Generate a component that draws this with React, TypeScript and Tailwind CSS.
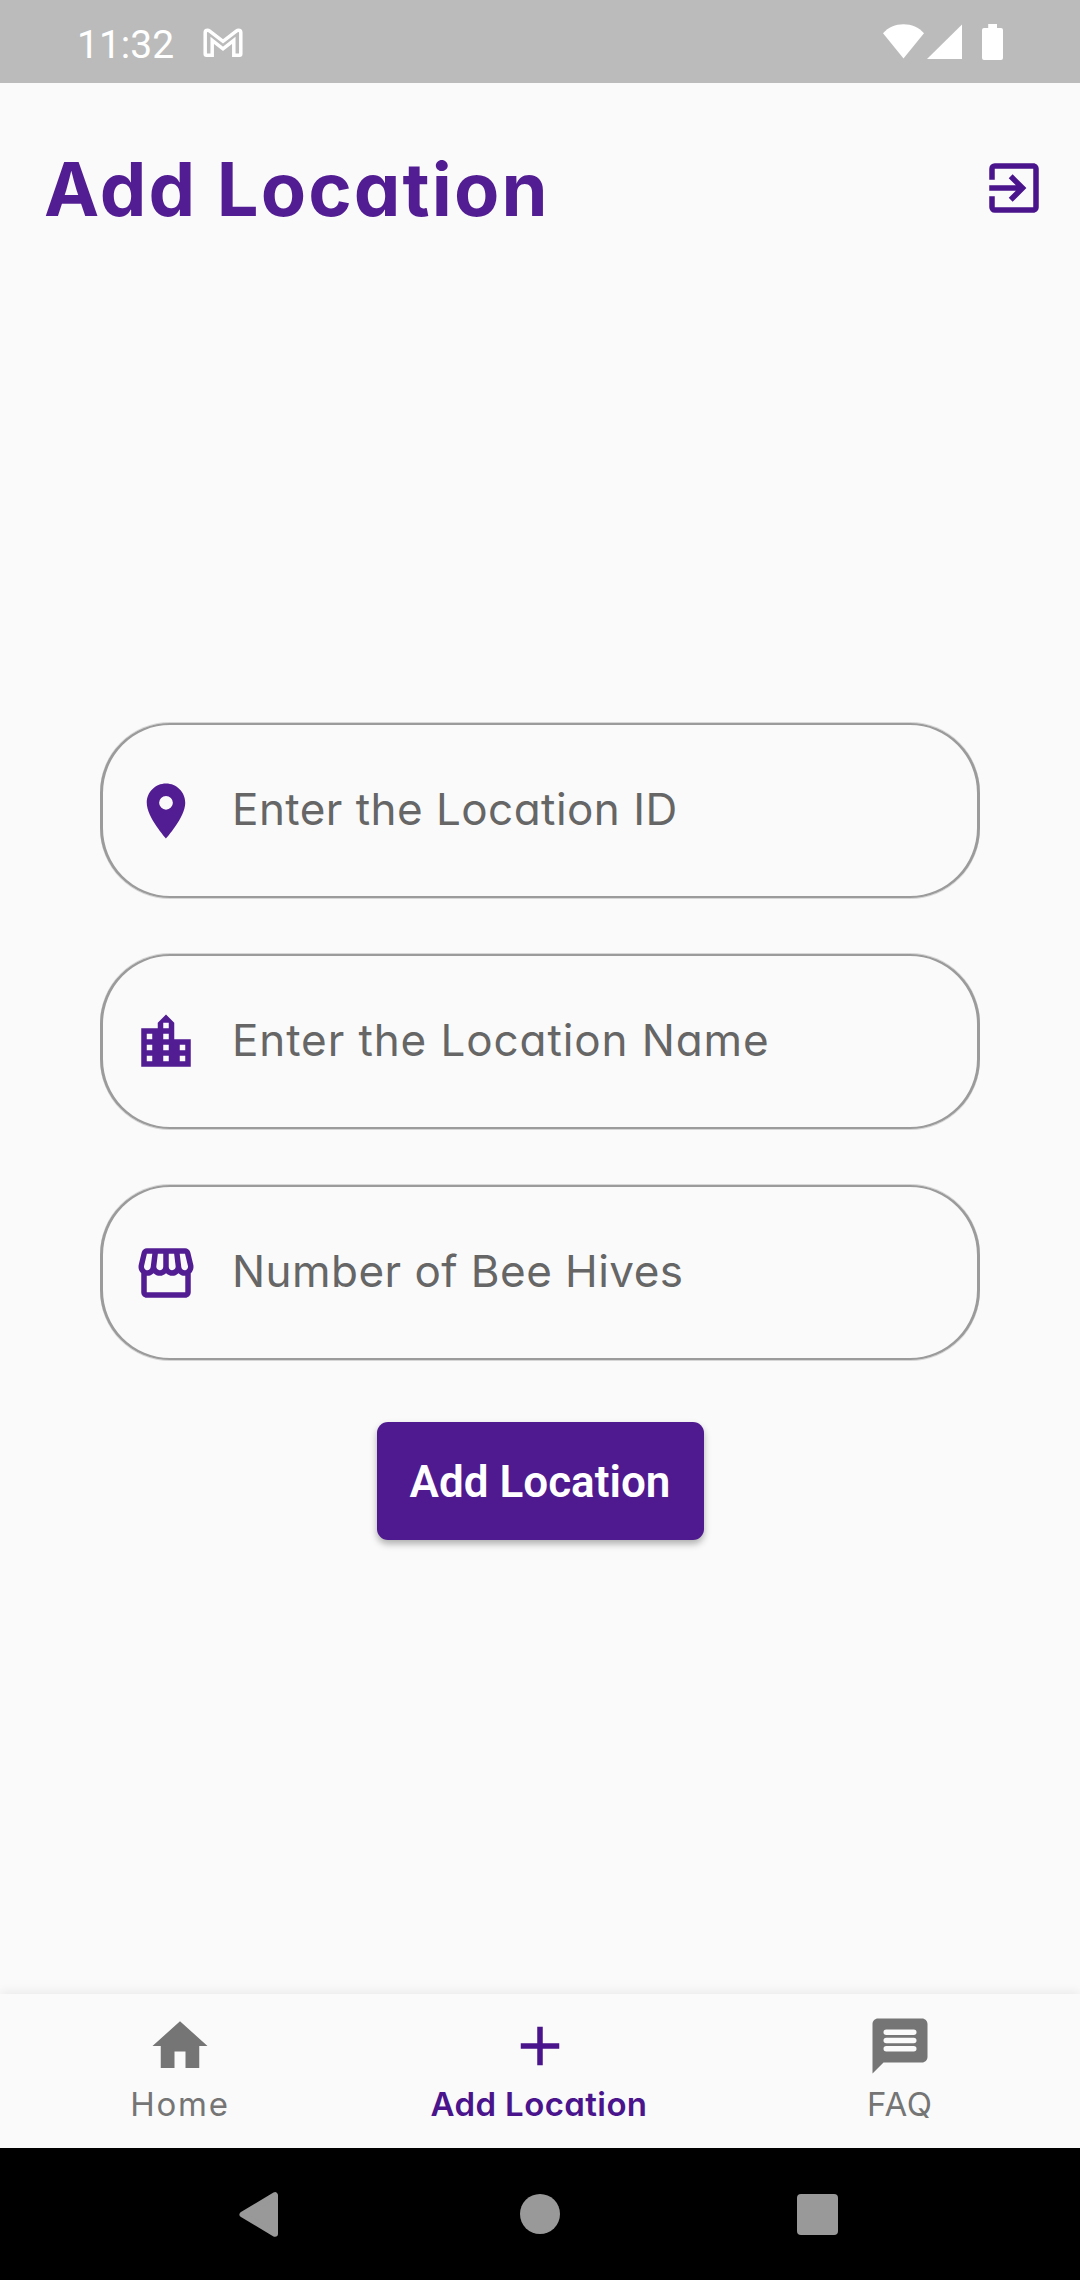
import React from "react";
import type { IconType } from "react-icons";
import {
  MdAdd,
  MdExitToApp,
  MdHome,
  MdLocationCity,
  MdOutlineStorefront,
  MdPlace,
} from "react-icons/md";

function StatusBar() {
  return (
    <div className="flex h-[83px] shrink-0 items-center bg-[#bbbbbb] pl-[77px] pr-[77px] text-white">
      <span className="font-[Roboto,sans-serif] text-[39px] leading-[46px] pt-[6px]">11:32</span>
      <svg className="ml-[29px] mt-[2px] h-[30px] w-[40px]" viewBox="0 0 40 30" fill="none">
        <path
          d="M3.4 27.3Q2.2 27.3 2.2 25.8V4.6Q2.2 2.2 4.6 2.2Q5.6 2.2 6.4 2.8L20 13.4L33.6 2.8Q34.4 2.2 35.4 2.2Q37.8 2.2 37.8 4.6V25.8Q37.8 27.3 36.6 27.3H30.8V12.4L20 20.8L9.2 12.4V27.3Z"
          stroke="currentColor"
          strokeWidth="3.5"
        />
      </svg>
      <div className="ml-auto flex items-center">
        <svg className="h-[36px] w-[41px]" viewBox="0 0 41 36" fill="currentColor">
          <path d="M0 9.2C5.2 3.2 12.400 .2 20.500 .2S35.800 3.200 41 9.200L20.500 34.600Z" />
        </svg>
        <svg className="ml-[3px] h-[36px] w-[35px]" viewBox="0 0 35 36" fill="currentColor">
          <path d="M0 35L35 .5V35Z" />
        </svg>
        <svg className="ml-5 h-[36px] w-[21px]" viewBox="0 0 21 36" fill="currentColor">
          <path d="M6.200 0h8.800v4h4q2 0 2 2v28q0 2-2 2H2q-2 0-2-2V6q0-2 2-2h4.200z" />
        </svg>
      </div>
    </div>
  );
}

function Field({ icon: Icon, label, tracking }: { icon: IconType; label: string; tracking: string }) {
  return (
    <label className="flex h-[175px] items-center rounded-[70px] border-x-[3px] border-y-2 border-[#9b9b9b] pl-[30px] shadow-[0_1px_0_#9b9b9b60,0_-1px_0_#9b9b9b60]">
      <Icon className="size-[66px] shrink-0 text-[#521d92]" />
      <input
        type="text"
        placeholder={label}
        className={`ml-[33px] mb-[3px] h-[66px] min-w-0 flex-1 bg-transparent text-[44px] text-[#666666] outline-none placeholder:text-[#666666] placeholder:opacity-100 ${tracking}`}
      />
    </label>
  );
}

function ChatIcon() {
  return (
    <svg className="size-[66px]" viewBox="0 0 24 24" fill="currentColor">
      <path d="M20 2H4c-1.100 0-2 .9-2 2v18l4-4h14c1.100 0 2-.9 2-2V4c0-1.100-.9-2-2-2z" />
      <path d="M7 7h10M7 10h10M7 13h10" stroke="#fafafa" strokeWidth="2" strokeLinecap="round" />
    </svg>
  );
}

function BottomNav() {
  return (
    <nav className="grid h-[154px] shrink-0 grid-cols-3 bg-[#fafafa] pt-[19px] text-[33px] leading-[42px] text-[#757575] shadow-[0_-2px_10px_rgba(0,0,0,0.07)]">
      <div className="flex flex-col items-center gap-1">
        <MdHome className="size-[66px]" />
        <span className="tracking-[1.8px]">Home</span>
      </div>
      <div className="flex flex-col items-center gap-1 text-[#4a148c]">
        <MdAdd className="size-[66px]" />
        <span className="-ml-0.5 font-semibold tracking-[0.4px]">Add Location</span>
      </div>
      <div className="flex flex-col items-center gap-1">
        <ChatIcon />
        <span className="tracking-[0.8px]">FAQ</span>
      </div>
    </nav>
  );
}

function SystemNav() {
  return (
    <div className="flex h-[132px] shrink-0 items-center bg-black pl-[239px] pr-[242px] text-[#999999]">
      <svg className="h-[46px] w-[39px]" viewBox="0 0 39 46" fill="currentColor">
        <path
          d="M3.500 23.500L36 4.200V42.800Z"
          stroke="currentColor"
          strokeWidth="6"
          strokeLinejoin="round"
        />
      </svg>
      <div className="ml-[242px] size-10 rounded-full bg-[#999999]" />
      <div className="ml-auto mt-px h-[41px] w-[41px] rounded bg-[#999999]" />
    </div>
  );
}

export default function App() {
  return (
    <div className="flex h-[2280px] w-[1080px] flex-col overflow-hidden bg-[#fafafa] font-[Inter,sans-serif] [font-feature-settings:'cv11']">
      <StatusBar />
      <header className="flex h-[210px] shrink-0 items-center justify-between pl-[44px] pr-[33px]">
        <h1 className="mt-px text-[74px] font-bold leading-[100px] tracking-[2.1px] text-[#521d92]">
          Add Location
        </h1>
        <MdExitToApp className="size-[66px] text-[#4a148c]" />
      </header>
      <main className="flex flex-1 flex-col px-[100px] pt-[430px]">
        <form className="flex flex-col gap-14">
          <Field icon={MdPlace} label="Enter the Location ID" tracking="tracking-[0.45px]" />
          <Field icon={MdLocationCity} label="Enter the Location Name" tracking="tracking-[0.9px]" />
          <Field icon={MdOutlineStorefront} label="Number of Bee Hives" tracking="tracking-[0.45px]" />
        </form>
        <button
          type="button"
          className="mt-[62px] h-[118px] w-[327px] self-center rounded-[11px] bg-[#4f1a8f] pt-[2px] font-[Roboto,sans-serif] text-[44px] font-semibold text-white shadow-[0_4px_7px_rgba(0,0,0,0.3)]"
        >
          Add Location
        </button>
      </main>
      <BottomNav />
      <SystemNav />
    </div>
  );
}
